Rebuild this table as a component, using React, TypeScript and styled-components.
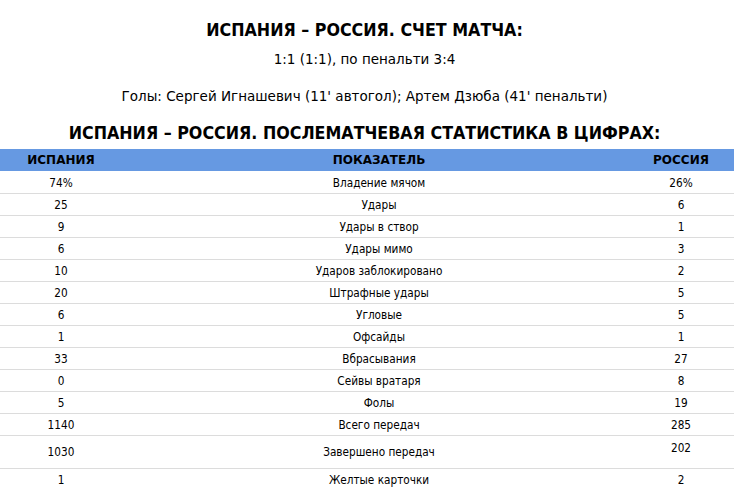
import React from 'react'
import styled, { createGlobalStyle } from 'styled-components'

const GlobalStyle = createGlobalStyle`
  html, body {
    margin: 0;
    padding: 0;
    background: #fff;
  }
  body {
    font-family: Tahoma, 'DejaVu Sans', sans-serif;
    color: #000;
  }
`

const Page = styled.div`
  width: 734px;
  padding-top: 19px;
`

const Title = styled.h2<{ $gap?: number }>`
  margin: 0 0 ${({ $gap }) => $gap ?? 0}px;
  padding-right: 5px;
  font-size: 17.7px;
  line-height: 22px;
  font-weight: 700;
  font-stretch: condensed;
  text-align: center;
  text-transform: uppercase;
`

const Line = styled.p<{ $gap?: number }>`
  margin: 0 0 ${({ $gap }) => $gap ?? 0}px;
  padding-right: 5px;
  font-size: 13.5px;
  line-height: 18px;
  text-align: center;
`

const Table = styled.div`
  width: 100%;
  font-size: 11.7px;
  font-stretch: condensed;
`

const Row = styled.div<{ $tall?: boolean }>`
  display: grid;
  grid-template-columns: 122px 1fr 106px;
  align-items: center;
  min-height: ${({ $tall }) => ($tall ? 32 : 21)}px;
  border-bottom: 1px solid #dcdcdc;
`

const HeadRow = styled(Row)`
  min-height: 22px;
  margin-bottom: 1px;
  background: #6699e2;
  border-bottom: none;
  font-size: 12px;
  font-weight: 700;
  font-stretch: normal;
`

const Cell = styled.div<{ $top?: boolean; $mid?: boolean }>`
  text-align: center;
  line-height: 15px;
  align-self: ${({ $top }) => ($top ? 'start' : 'center')};
  padding-top: ${({ $top }) => ($top ? 5 : 1)}px;
  padding-left: ${({ $mid }) => ($mid ? 8 : 0)}px;
`

const stats: [string, string, string, boolean?][] = [
  ['74%', 'Владение мячом', '26%'],
  ['25', 'Удары', '6'],
  ['9', 'Удары в створ', '1'],
  ['6', 'Удары мимо', '3'],
  ['10', 'Ударов заблокировано', '2'],
  ['20', 'Штрафные удары', '5'],
  ['6', 'Угловые', '5'],
  ['1', 'Офсайды', '1'],
  ['33', 'Вбрасывания', '27'],
  ['0', 'Сейвы вратаря', '8'],
  ['5', 'Фолы', '19'],
  ['1140', 'Всего передач', '285'],
  ['1030', 'Завершено передач', '202', true],
  ['1', 'Желтые карточки', '2'],
]

export default function App() {
  return (
    <Page>
      <GlobalStyle />
      <Title $gap={9}>Испания – Россия. Счет матча:</Title>
      <Line $gap={19}>1:1 (1:1), по пенальти 3:4</Line>
      <Line $gap={17}>Голы: Сергей Игнашевич (11' автогол); Артем Дзюба (41' пенальти)</Line>
      <Title $gap={5}>Испания – Россия. Послематчевая статистика в цифрах:</Title>
      <Table>
        <HeadRow>
          <Cell>ИСПАНИЯ</Cell>
          <Cell $mid>ПОКАЗАТЕЛЬ</Cell>
          <Cell>РОССИЯ</Cell>
        </HeadRow>
        {stats.map(([home, label, away, tall]) => (
          <Row key={label} $tall={tall}>
            <Cell>{home}</Cell>
            <Cell $mid>{label}</Cell>
            <Cell $top={tall}>{away}</Cell>
          </Row>
        ))}
      </Table>
    </Page>
  )
}
